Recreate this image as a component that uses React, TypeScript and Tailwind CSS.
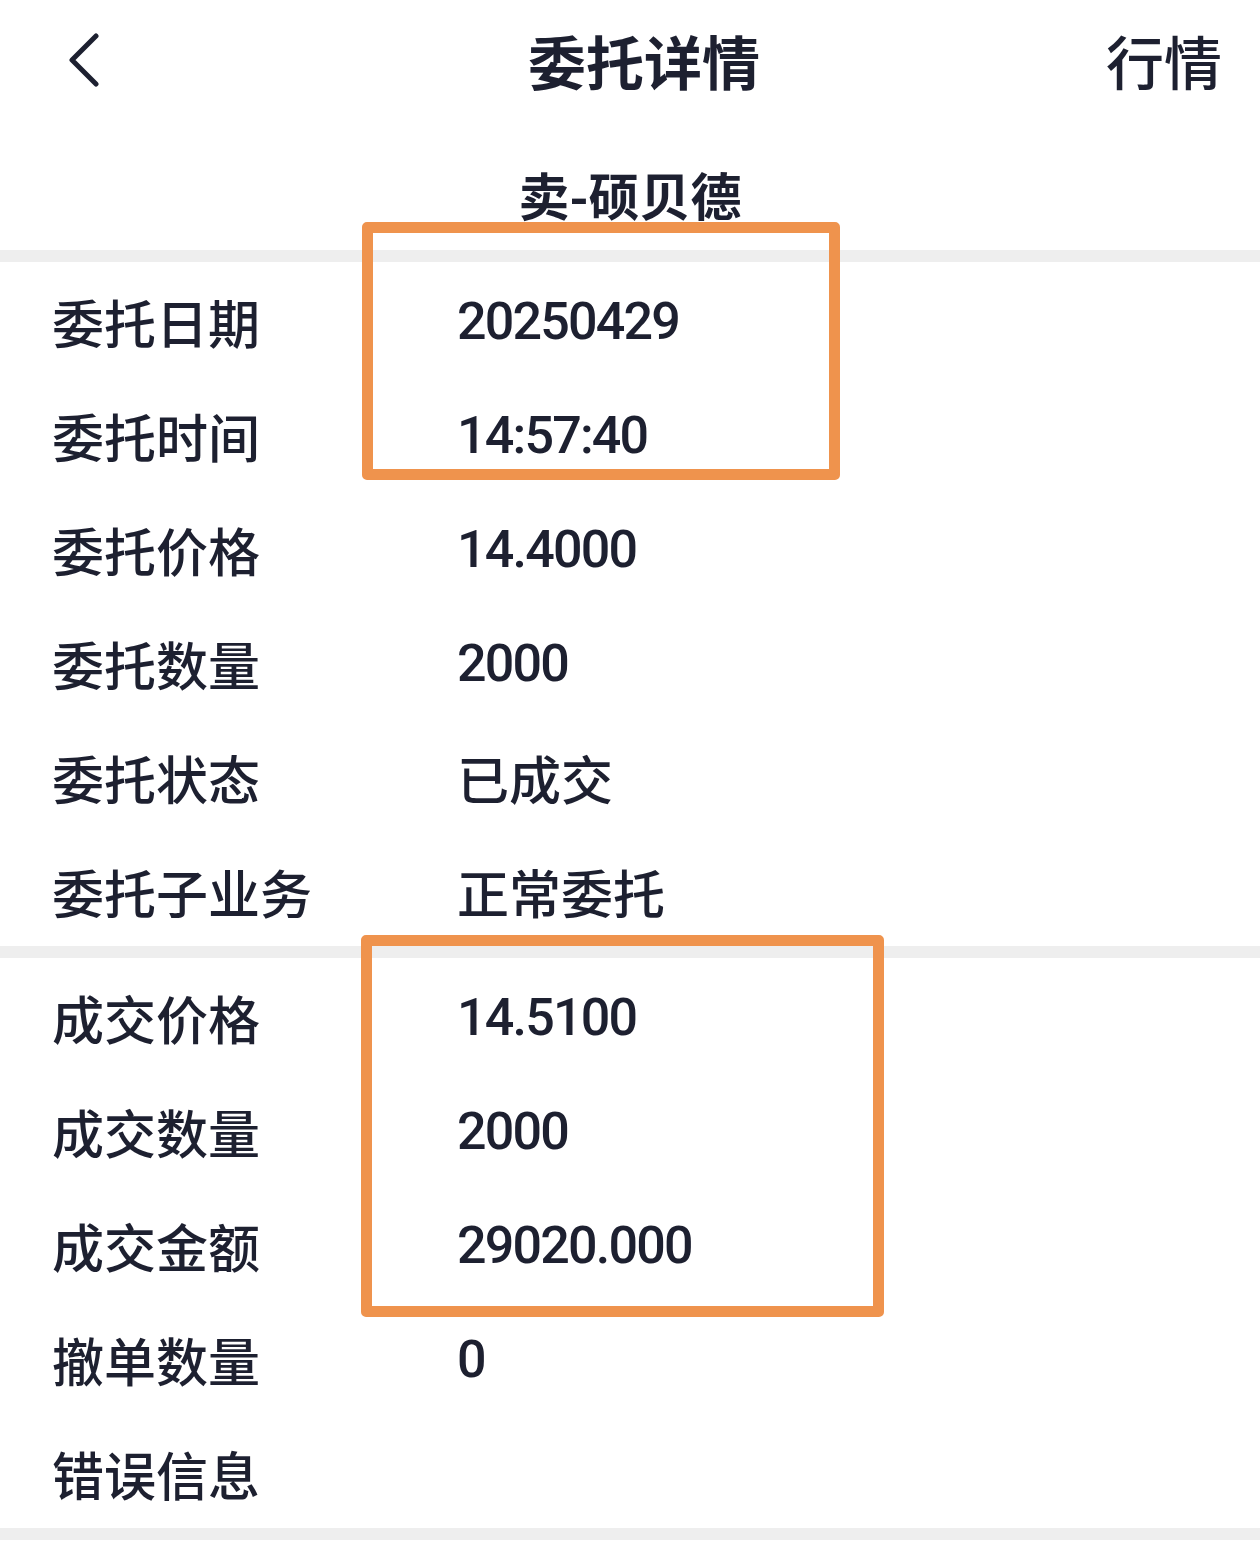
import React from "react";

const cjk = { fontFamily: '"Noto Sans CJK SC", "Noto Sans", sans-serif' };
const num = { fontFamily: 'Roboto, "Noto Sans CJK SC", sans-serif' };

type Row = { label: string; value: string; isNum?: boolean };

const section1: Row[] = [
  { label: "委托日期", value: "20250429", isNum: true },
  { label: "委托时间", value: "14:57:40", isNum: true },
  { label: "委托价格", value: "14.4000", isNum: true },
  { label: "委托数量", value: "2000", isNum: true },
  { label: "委托状态", value: "已成交" },
  { label: "委托子业务", value: "正常委托" },
];

const section2: Row[] = [
  { label: "成交价格", value: "14.5100", isNum: true },
  { label: "成交数量", value: "2000", isNum: true },
  { label: "成交金额", value: "29020.000", isNum: true },
  { label: "撤单数量", value: "0", isNum: true },
  { label: "错误信息", value: "" },
];

function InfoRow({ row }: { row: Row }) {
  return (
    <div className="flex h-[114px] items-center pt-[6px] text-[#1d2030]">
      <div className="w-[457px] shrink-0 pl-[52px] text-[52px] leading-none font-medium whitespace-nowrap" style={cjk}>
        {row.label}
      </div>
      {row.isNum ? (
        <div className="text-[52px] leading-none font-medium tracking-[-1.8px] whitespace-nowrap" style={num}>
          {row.value}
        </div>
      ) : (
        <div className="text-[52px] leading-none font-medium whitespace-nowrap" style={cjk}>
          {row.value}
        </div>
      )}
    </div>
  );
}

export default function App() {
  return (
    <div className="relative h-[1542px] w-[1260px] overflow-hidden bg-white text-[#1d2030]">
      <div className="flex h-[120px] items-center justify-between pl-[66px] pr-[38px]">
        <div className="w-[116px] shrink-0">
          <svg width="34" height="54" viewBox="0 0 34 54" fill="none">
            <polyline
              points="30,3 6,27 30,51"
              stroke="#1d2030"
              strokeWidth="5"
              strokeLinecap="round"
              strokeLinejoin="round"
            />
          </svg>
        </div>
        <div className="text-[58px] leading-none font-bold whitespace-nowrap" style={cjk}>
          委托详情
        </div>
        <div className="w-[116px] shrink-0 text-right text-[58px] leading-none font-medium whitespace-nowrap" style={cjk}>
          行情
        </div>
      </div>
      <div className="flex h-[130px] items-end justify-center pb-[30px]">
        <div className="text-[51px] leading-none font-bold whitespace-nowrap" style={cjk}>
          卖-硕贝德
        </div>
      </div>
      <div className="h-[12px] bg-[#eeeeee]" />
      {section1.map((r) => (
        <InfoRow key={r.label} row={r} />
      ))}
      <div className="h-[12px] bg-[#eeeeee]" />
      {section2.map((r) => (
        <InfoRow key={r.label} row={r} />
      ))}
      <div className="h-[12px] bg-[#eeeeee]" />

      <div className="absolute left-[362px] top-[222px] h-[258px] w-[478px] rounded-[5px] border-[11px] border-[#ef934d]" />
      <div className="absolute left-[361px] top-[935px] h-[382px] w-[523px] rounded-[5px] border-[11px] border-[#ef934d]" />
    </div>
  );
}
